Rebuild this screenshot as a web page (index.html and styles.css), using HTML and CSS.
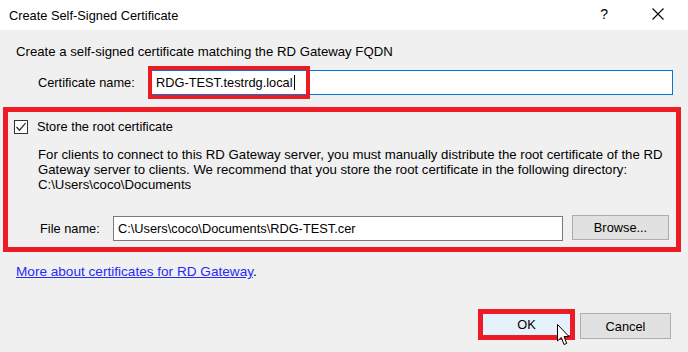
FILE: index.html
```html
<!DOCTYPE html>
<html lang="en">
<head>
  <meta charset="UTF-8" />
  <title>Create Self-Signed Certificate</title>
  <link rel="stylesheet" href="styles.css">
</head>
<body>
  <div class="dialog">
    <div class="titlebar">
      <span class="title">Create Self-Signed Certificate</span>
      <span class="help">?</span>
      <svg class="close" width="12" height="12" viewBox="0 0 12 12">
        <path d="M0.5 0.5 L11.5 11.5 M11.5 0.5 L0.5 11.5" stroke="#000" stroke-width="1.1" fill="none" />
      </svg>
    </div>

    <div class="content">
      <p class="intro">Create a self-signed certificate matching the RD Gateway FQDN</p>

      <div class="row cert-row">
        <label class="row-label">Certificate name:</label>
        <div class="field focused">RDG-TEST.testrdg.local<span class="caret"></span></div>
        <span class="mark mark-name"></span>
      </div>

      <div class="group">
        <div class="check-row">
          <span class="checkbox">
            <svg width="12" height="12" viewBox="0 0 12 12">
              <path d="M1.5 6 L4.5 9.2 L10.5 2.2" stroke="#333" stroke-width="1.3" fill="none" />
            </svg>
          </span>
          <span>Store the root certificate</span>
        </div>
        <p class="note">For clients to connect to this RD Gateway server, you must manually distribute the root certificate of the RD<br>Gateway server to clients. We recommend that you store the root certificate in the following directory:<br>C:\Users\coco\Documents</p>
        <div class="row file-row">
          <label class="row-label">File name:</label>
          <div class="field">C:\Users\coco\Documents\RDG-TEST.cer</div>
          <button class="btn btn-browse">Browse...</button>
        </div>
      </div>

      <p class="more"><a href="#">More about certificates for RD Gateway</a>.</p>

      <div class="actions">
        <span class="mark-ok"><button class="btn btn-default">OK</button></span>
        <button class="btn btn-cancel">Cancel</button>
        <svg class="cursor" width="13" height="22" viewBox="0 0 13 22">
          <path d="M0.5 0.5 L0.5 17 L4.3 13.4 L7 20.5 L9.7 19.4 L7 12.6 L12 12.6 Z" fill="#fff" stroke="#000" stroke-width="1" />
        </svg>
      </div>
    </div>
  </div>
</body>
</html>
```

FILE: styles.css
```css
* {
  margin: 0;
  padding: 0;
  box-sizing: border-box;
}
html, body {
  width: 688px;
  height: 352px;
  overflow: hidden;
  background: #f0f0f0;
  font-family: "Liberation Sans", Arial, sans-serif;
  font-size: 12.8px;
  color: #000;
}
.dialog {
  height: 352px;
  display: flex;
  flex-direction: column;
}
.titlebar {
  height: 30px;
  background: #fff;
  display: flex;
  align-items: center;
  padding-left: 9px;
}
.title {
  font-size: 12.8px;
  flex: 1;
}
.help {
  font-size: 14px;
  margin-right: 44px;
  margin-top: -2px;
}
.close {
  margin-right: 24px;
  margin-top: -3px;
}
.content {
  flex: 1;
  background: #f0f0f0;
}
.intro {
  margin: 14px 0 0 16px;
  line-height: 15px;
  font-size: 13.2px;
}
.row {
  display: flex;
  align-items: center;
  position: relative;
}
.cert-row {
  margin: 11px 0 0 38px;
}
.cert-row .row-label {
  width: 113px;
}
.field {
  height: 25px;
  background: #fff;
  border: 1px solid #7a7a7a;
  padding-left: 4px;
  display: flex;
  align-items: center;
  white-space: nowrap;
}
.cert-row .field {
  width: 522px;
}
.field.focused {
  border-color: #0078d7;
}
.caret {
  display: inline-block;
  width: 1px;
  height: 15px;
  background: #000;
  margin-left: 1px;
}
.mark {
  position: absolute;
  border: 4px solid #ed1c24;
}
.mark-name {
  left: 110px;
  top: -4px;
  width: 162px;
  height: 33px;
}
.group {
  margin: 12px 7px 0 3px;
  height: 145px;
  border: 5px solid #ed1c24;
  padding: 7px 0 0 6px;
}
.check-row {
  display: flex;
  align-items: center;
  height: 15px;
  gap: 9px;
}
.checkbox {
  width: 14px;
  height: 14px;
  border: 1px solid #333;
  background: #fff;
  display: flex;
  align-items: center;
  justify-content: center;
}
.note {
  margin: 13px 0 0 24px;
  line-height: 15px;
  font-size: 13.2px;
}
.file-row {
  margin: 24px 0 0 26px;
}
.file-row .row-label {
  width: 73px;
}
.file-row .field {
  width: 450px;
}
.btn {
  font-family: inherit;
  font-size: 12.8px;
  color: #000;
  background: #e1e1e1;
  border: 1px solid #adadad;
  height: 25px;
}
.btn-browse {
  width: 97px;
  margin-left: 9px;
  margin-top: -2px;
}
.more {
  margin: 12px 0 0 16px;
  line-height: 15px;
  font-size: 13.6px;
}
.more a {
  color: #2a2af5;
}
.actions {
  margin: 30px 17px 0 0;
  display: flex;
  justify-content: flex-end;
  align-items: flex-start;
  position: relative;
}
.mark-ok {
  display: block;
  border: 5px solid #ed1c24;
}
.btn-default {
  display: block;
  width: 87px;
  height: 21px;
  background: #e5f1fb;
  border: none;
}
.btn-cancel {
  width: 91px;
  height: 26px;
  margin: 4px 0 0 5px;
}
.cursor {
  position: absolute;
  left: 557px;
  top: 15px;
}
```
